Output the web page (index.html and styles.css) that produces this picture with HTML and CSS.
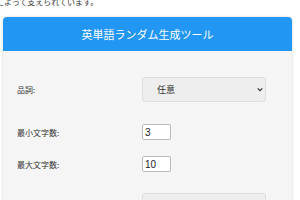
FILE: index.html
```html
<!DOCTYPE html>
<html lang="ja">
<head>
  <meta charset="UTF-8" />
  <meta name="viewport" content="width=device-width, initial-scale=1.0"/>
  <title>英単語ランダム生成ツール</title>
  <link rel="stylesheet" href="styles.css">
</head>
<body>
  <p class="intro">によって支えられています。</p>

  <div class="card">
    <div class="card-header">
      <h1>英単語ランダム生成ツール</h1>
    </div>

    <div class="card-body">
      <div class="form-row row-pos">
        <label for="pos">品詞:</label>
        <div class="select-wrap">
          <select id="pos">
            <option>任意</option>
            <option>名詞</option>
            <option>動詞</option>
            <option>形容詞</option>
          </select>
          <svg class="chevron" viewBox="0 0 8 6" width="6" height="5">
            <path d="M1 1.5 L4 4.5 L7 1.5" fill="none" stroke="#333" stroke-width="1.6"/>
          </svg>
        </div>
      </div>

      <div class="form-row row-min">
        <label for="min-len">最小文字数:</label>
        <input type="text" id="min-len" value="3">
      </div>

      <div class="form-row row-max">
        <label for="max-len">最大文字数:</label>
        <input type="text" id="max-len" value="10">
      </div>

      <div class="form-row">
        <span></span>
        <button id="generate">生成</button>
      </div>
    </div>
  </div>
</body>
</html>
```

FILE: styles.css
```css
body {
  margin: 0;
  font-family: "Noto Sans CJK JP", "Noto Sans", sans-serif;
  background-color: #fff;
  color: #333;
  overflow: hidden;
}

.intro {
  margin: -5px 0 0;
  font-size: 8px;
  line-height: 13px;
  text-indent: -4px;
  color: #333;
}

.card {
  width: 289px;
  margin: 9px 0 0 3px;
  background: #f5f5f5;
  border-radius: 4px;
  box-shadow: 0 0 3px rgba(0, 0, 0, 0.18);
  overflow: hidden;
}

.card-header {
  background-color: #2196f3;
  height: 34px;
  display: flex;
  align-items: center;
  justify-content: center;
}

.card-header h1 {
  margin: 0;
  font-size: 11px;
  font-weight: normal;
  color: #fff;
}

.card-body {
  padding: 26px 14px 20px;
}

.form-row {
  display: grid;
  grid-template-columns: 125px 124px;
  align-items: center;
}

.form-row label {
  font-size: 8px;
  color: #333;
}

.row-pos { margin-bottom: 22px; }
.row-min { margin-bottom: 16px; }
.row-max { margin-bottom: 21px; }

.select-wrap {
  position: relative;
}

select {
  display: block;
  width: 124px;
  height: 25px;
  padding: 0 8px 0 14px;
  appearance: none;
  -webkit-appearance: none;
  font-family: inherit;
  font-size: 9px;
  color: #333;
  background-color: #eee;
  border: 1px solid #ddd;
  border-radius: 3px;
}

.chevron {
  position: absolute;
  right: 3px;
  top: 10px;
  pointer-events: none;
}

input[type="text"] {
  width: 29px;
  height: 16px;
  box-sizing: border-box;
  padding: 0 2px;
  font-family: "Liberation Sans", sans-serif;
  font-size: 10px;
  color: #222;
  background: #fff;
  border: 1px solid #bbb;
  border-radius: 2px;
}

button {
  height: 34px;
  font-family: inherit;
  font-size: 9px;
  color: #333;
  background-color: #eee;
  border: 1px solid #ddd;
  border-radius: 3px;
}
```
